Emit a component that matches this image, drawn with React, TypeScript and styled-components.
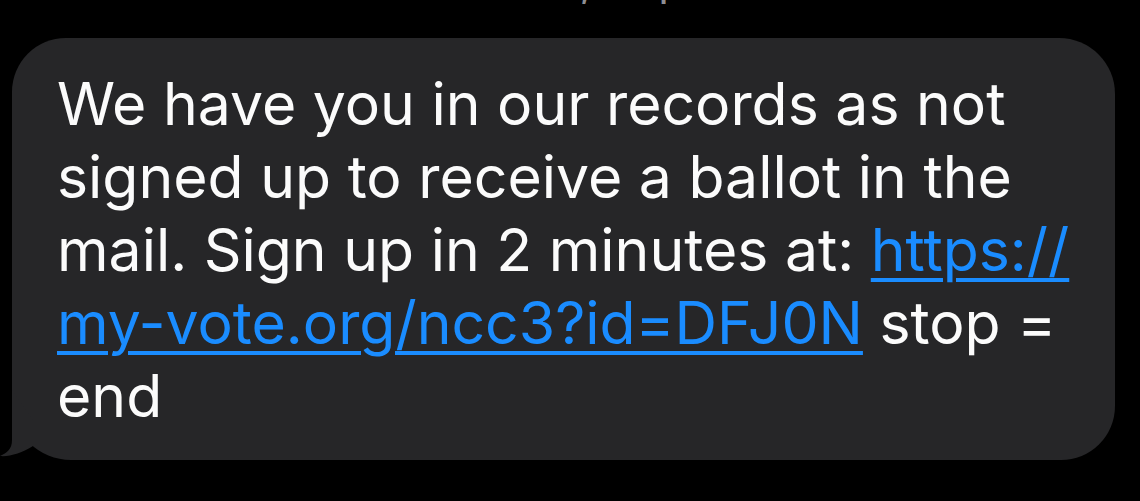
import React from "react";
import styled, { createGlobalStyle } from "styled-components";

const GlobalStyle = createGlobalStyle`
  html, body {
    margin: 0;
    padding: 0;
    background: #000;
  }
`;

const Screen = styled.div`
  width: 1140px;
  height: 501px;
  background: #000;
  overflow: hidden;
`;

const TimeStrip = styled.div`
  height: 4px;
  overflow: hidden;
  padding-left: 499px;
`;

const TimeText = styled.div`
  margin-top: -40px;
  font-family: Inter, "Noto Sans", sans-serif;
  font-size: 44px;
  line-height: 40px;
  color: #8e8e93;
  white-space: nowrap;
`;

const Bubble = styled.div`
  position: relative;
  box-sizing: border-box;
  width: 1103px;
  height: 422px;
  margin: 34px 0 0 12px;
  padding: 29px 0 0 45px;
  background: #262628;
  border-radius: 54px 56px 54px 59px;
  font-family: Inter, "Noto Sans", sans-serif;
  font-size: 58.9px;
  line-height: 73px;
  color: #fbfbfb;
  white-space: nowrap;
`;

const Tail = styled.svg`
  position: absolute;
  left: -12px;
  bottom: 0;
  width: 40px;
  height: 70px;
  overflow: visible;
`;

const Link = styled.a`
  color: #1a8cff;
  text-decoration: underline;
  text-decoration-thickness: 4px;
  text-underline-offset: 7px;
`;

export default function App() {
  return (
    <>
      <GlobalStyle />
      <Screen>
        <TimeStrip>
          <TimeText>Thu, Sep 24 at 2:15 PM</TimeText>
        </TimeStrip>
        <Bubble>
          <Tail viewBox="0 0 40 70">
            <path
              d="M12 0 L12 50 C12 59 7 63 0 66 C9 67 22 63 33 56 L33 30 Z"
              fill="#262628"
            />
          </Tail>
          We have you in our records as not
          <br />
          signed up to receive a ballot in the
          <br />
          mail. Sign up in 2 minutes at: <Link href="#">https://</Link>
          <br />
          <Link href="#">my-vote.org/ncc3?id=DFJ0N</Link> stop =
          <br />
          end
        </Bubble>
      </Screen>
    </>
  );
}
